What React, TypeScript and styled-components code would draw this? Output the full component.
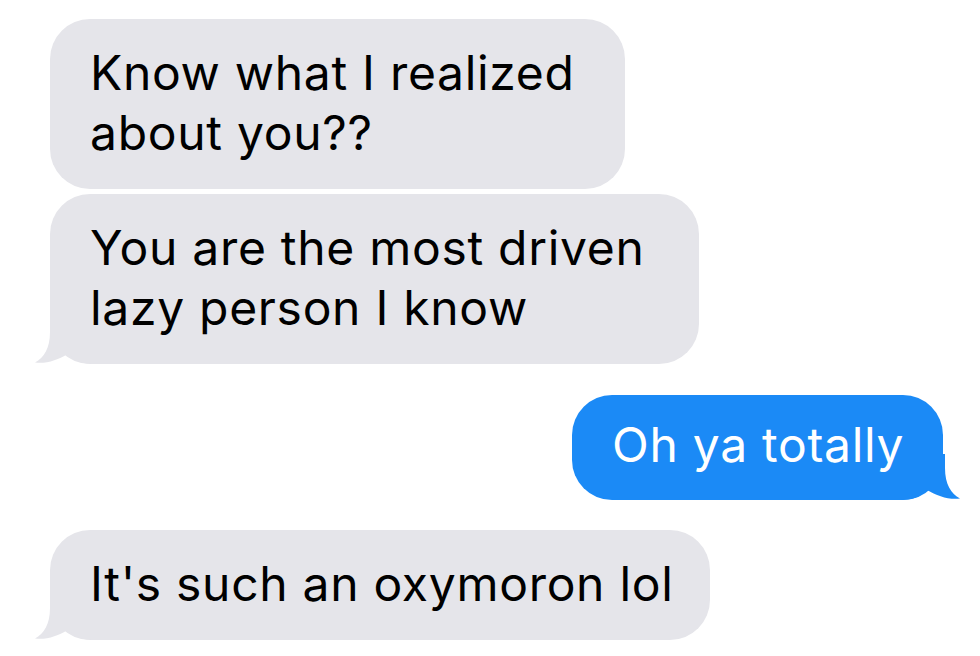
import React from "react";
import styled, { createGlobalStyle } from "styled-components";

const GlobalStyle = createGlobalStyle`
    html, body {
        margin: 0;
        padding: 0;
        background: #ffffff;
    }
`

const Thread = styled.div`
    width: 980px;
    height: 656px;
    box-sizing: border-box;
    padding: 19px 37px 0 50px;
    display: flex;
    flex-direction: column;
    overflow: hidden;
    background: #ffffff;
    font-family: Inter, "Liberation Sans", sans-serif;
`

const Row = styled.div<{ $mine?: boolean, $gap: number }>`
    display: flex;
    justify-content: ${p => p.$mine ? "flex-end" : "flex-start"};
    margin-top: ${p => p.$gap}px;
`

const Bubble = styled.div<{ $mine?: boolean, $width: number }>`
    position: relative;
    box-sizing: border-box;
    width: ${p => p.$width}px;
    padding: ${p => p.$mine ? "20px 30px 25px 40px" : "24px 30px 26px 40px"};
    border-radius: 40px;
    background-color: ${p => p.$mine ? "#1b8af6" : "#e5e5ea"};
    color: ${p => p.$mine ? "#ffffff" : "#000000"};
    font-size: 48px;
    line-height: 60px;
    letter-spacing: 0.7px;
`

const BubbleText = styled.span`
    position: relative;
`

const Tail = styled.svg<{ $mine?: boolean }>`
    position: absolute;
    bottom: 0;
    width: 60px;
    height: 46px;
    ${p => p.$mine ? "right: -17px; transform: scaleX(-1);" : "left: -15px;"}
    fill: ${p => p.$mine ? "#1b8af6" : "#e5e5ea"};
`

const BubbleTail = ({ mine }: { mine?: boolean }) => (
    <Tail $mine={mine} viewBox="0 0 60 46">
        <path d="M15 0 L15 14 C15 30 9 40 0 44.5 C11 46 23 42 33 36 C40 43 48 46 60 46 L60 0 Z" />
    </Tail>
)

type Message = {
    lines: string[],
    mine?: boolean,
    tail?: boolean,
    width: number,
    gap: number
}

const messages: Message[] = [
    { lines: ["Know what I realized", "about you??"], width: 575, gap: 0 },
    { lines: ["You are the most driven", "lazy person I know"], width: 649, gap: 5, tail: true },
    { lines: ["Oh ya totally"], width: 371, gap: 31, mine: true, tail: true },
    { lines: ["It's such an oxymoron lol"], width: 660, gap: 30, tail: true },
]

const App = () => {
    return (
        <>
            <GlobalStyle />
            <Thread>
                {messages.map((m, i) =>
                    <Row key={i} $mine={m.mine} $gap={m.gap}>
                        <Bubble $mine={m.mine} $width={m.width}>
                            {m.tail ? <BubbleTail mine={m.mine} /> : null}
                            <BubbleText>
                                {m.lines.map((l, j) =>
                                    <React.Fragment key={j}>
                                        {j > 0 ? <br /> : null}
                                        {l}
                                    </React.Fragment>
                                )}
                            </BubbleText>
                        </Bubble>
                    </Row>
                )}
            </Thread>
        </>
    )
}

export default App
